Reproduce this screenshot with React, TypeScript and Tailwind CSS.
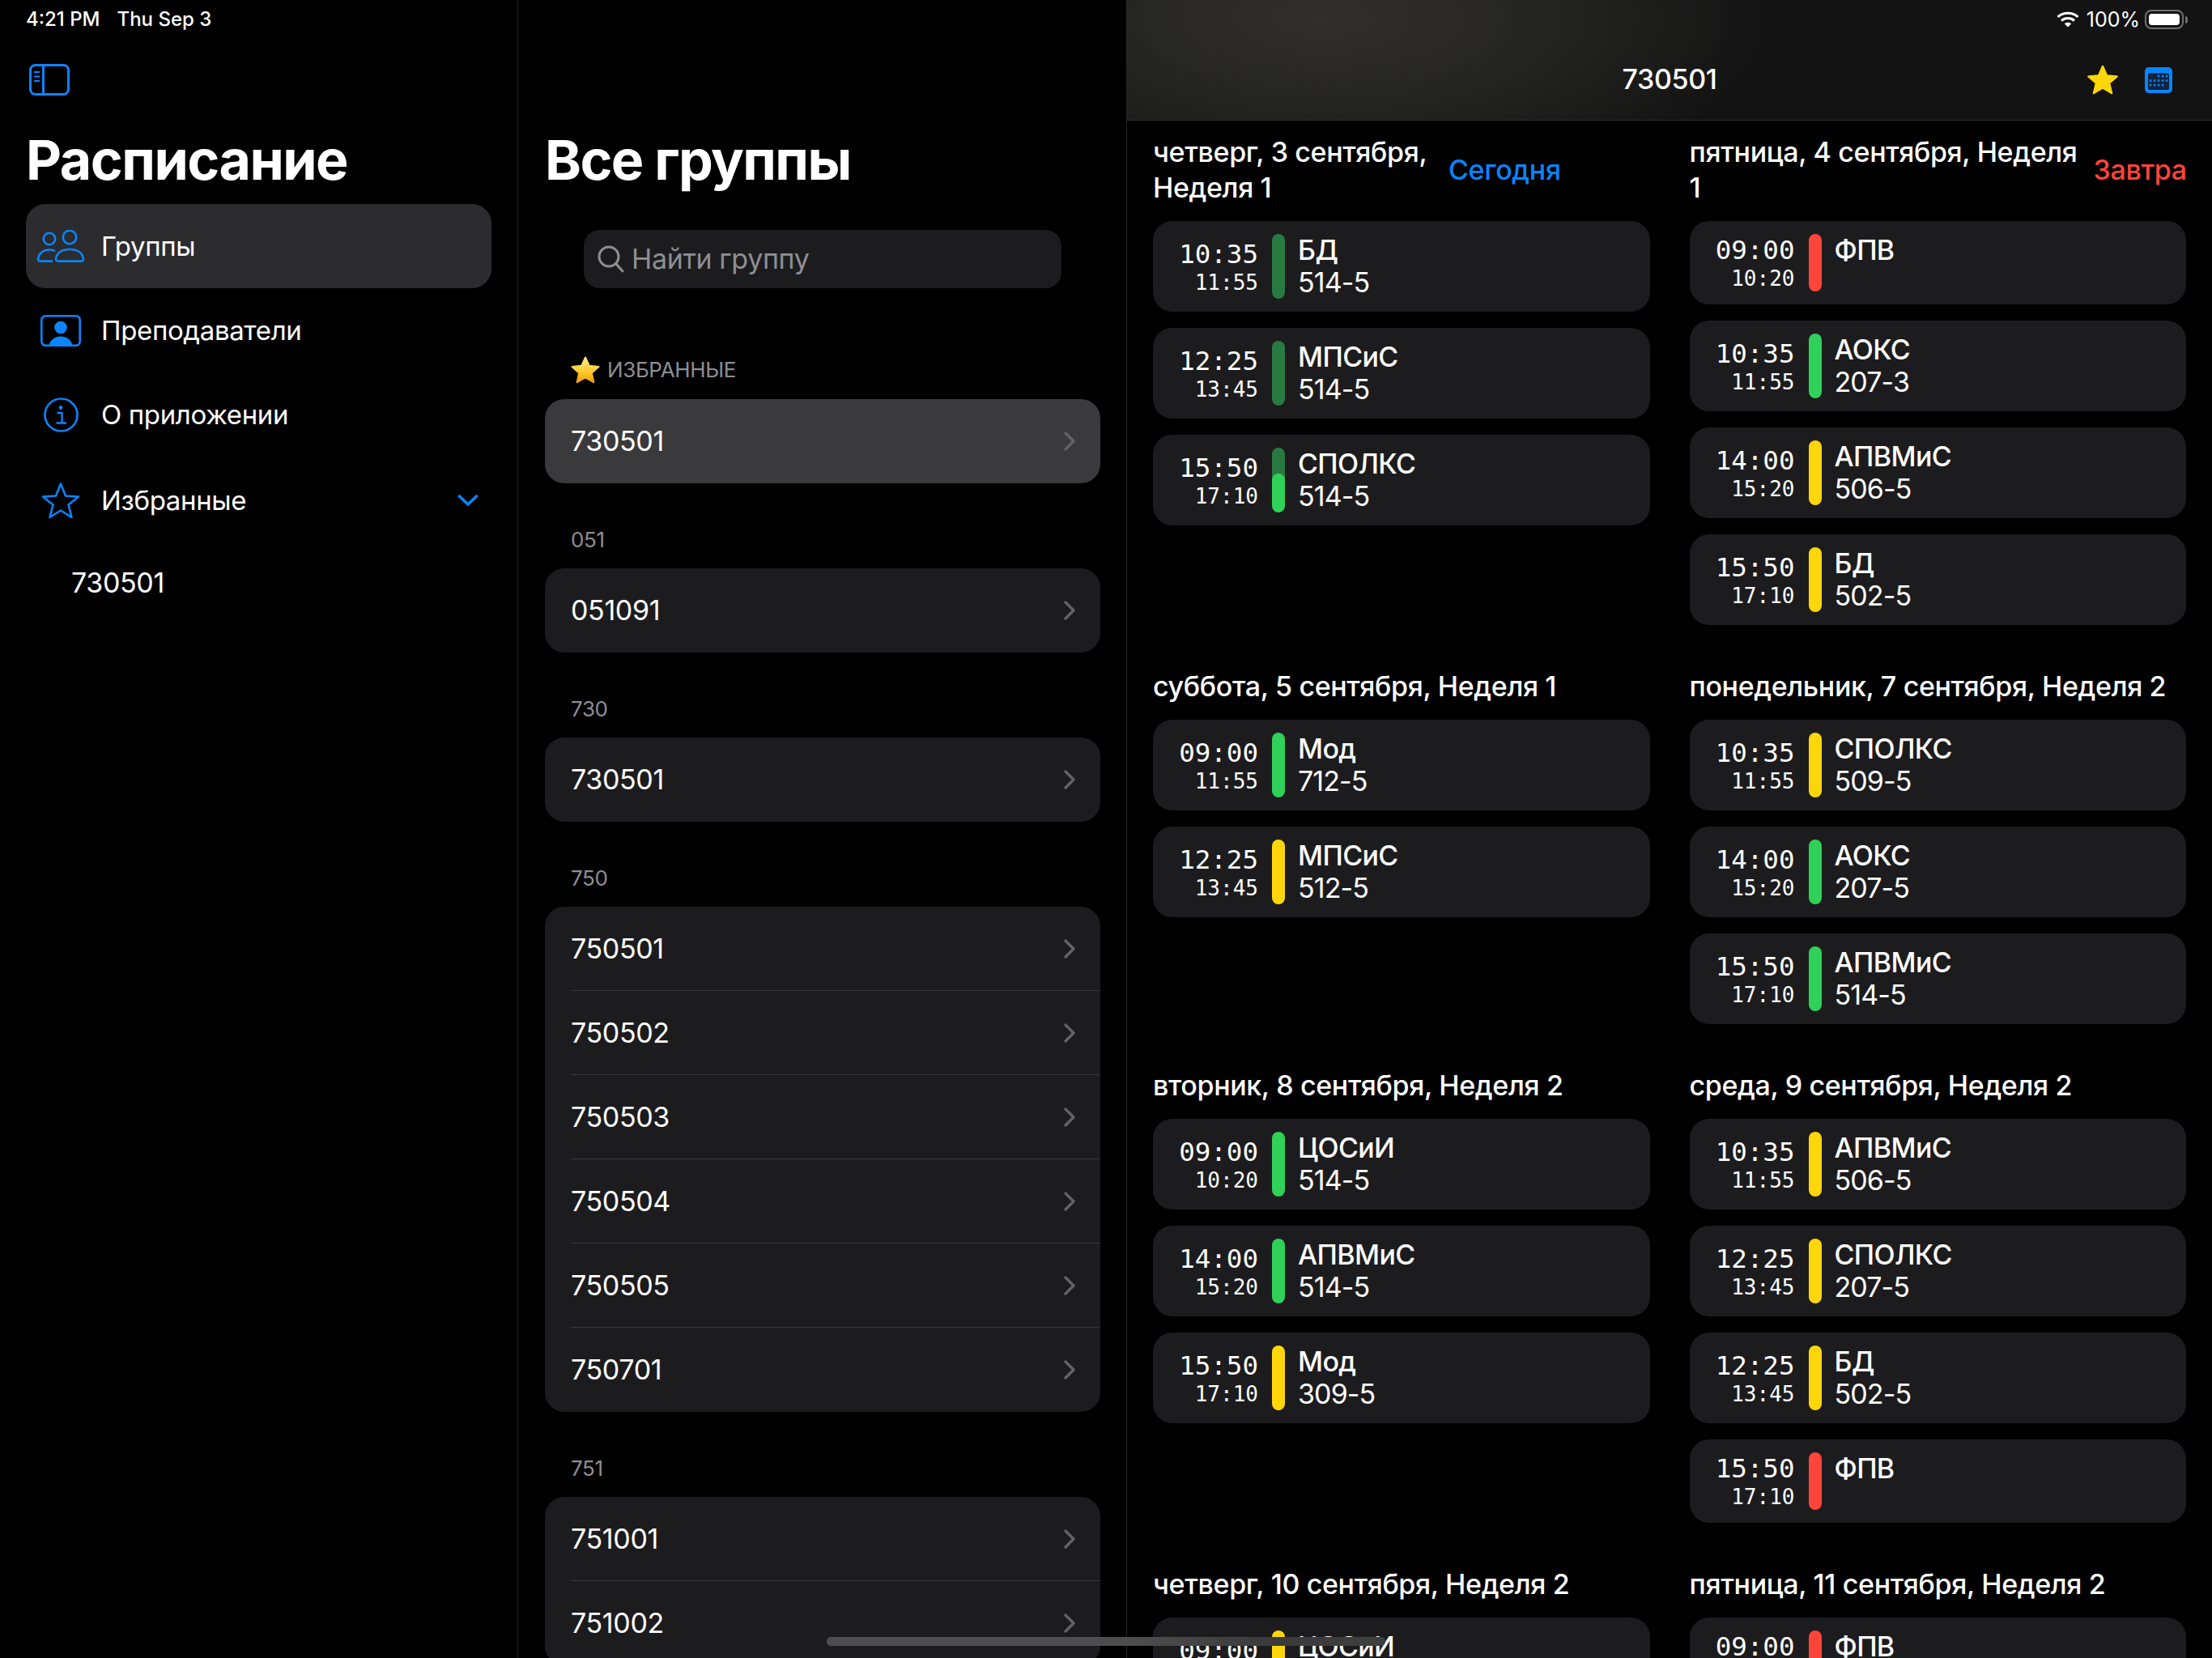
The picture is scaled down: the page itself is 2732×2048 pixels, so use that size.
import React from "react";

type Lesson = { from: string; to: string; name: string; room?: string; color: string; progress?: boolean };
type Day = { title: string; tag?: string; tagColor?: string; titleWidth?: string; lessons: Lesson[] };

const GREEN = "bg-[#30d158]";
const DONE = "bg-[#287a41]";
const YELLOW = "bg-[#ffd60a]";
const RED = "bg-[#ff453a]";

const days: Day[] = [
  {
    title: "четверг, 3 сентября,\nНеделя 1",
    tag: "Сегодня",
    tagColor: "text-[#0a84ff]",
    titleWidth: "w-[345px]",
    lessons: [
      { from: "10:35", to: "11:55", name: "БД", room: "514-5", color: DONE },
      { from: "12:25", to: "13:45", name: "МПСиС", room: "514-5", color: DONE },
      { from: "15:50", to: "17:10", name: "СПОЛКС", room: "514-5", color: DONE, progress: true },
    ],
  },
  {
    title: "пятница, 4 сентября, Неделя\n1",
    tag: "Завтра",
    tagColor: "text-[#ff453a]",
    titleWidth: "flex-1",
    lessons: [
      { from: "09:00", to: "10:20", name: "ФПВ", color: RED },
      { from: "10:35", to: "11:55", name: "АОКС", room: "207-3", color: GREEN },
      { from: "14:00", to: "15:20", name: "АПВМиС", room: "506-5", color: YELLOW },
      { from: "15:50", to: "17:10", name: "БД", room: "502-5", color: YELLOW },
    ],
  },
  {
    title: "суббота, 5 сентября, Неделя 1",
    lessons: [
      { from: "09:00", to: "11:55", name: "Мод", room: "712-5", color: GREEN },
      { from: "12:25", to: "13:45", name: "МПСиС", room: "512-5", color: YELLOW },
    ],
  },
  {
    title: "понедельник, 7 сентября, Неделя 2",
    lessons: [
      { from: "10:35", to: "11:55", name: "СПОЛКС", room: "509-5", color: YELLOW },
      { from: "14:00", to: "15:20", name: "АОКС", room: "207-5", color: GREEN },
      { from: "15:50", to: "17:10", name: "АПВМиС", room: "514-5", color: GREEN },
    ],
  },
  {
    title: "вторник, 8 сентября, Неделя 2",
    lessons: [
      { from: "09:00", to: "10:20", name: "ЦОСиИ", room: "514-5", color: GREEN },
      { from: "14:00", to: "15:20", name: "АПВМиС", room: "514-5", color: GREEN },
      { from: "15:50", to: "17:10", name: "Мод", room: "309-5", color: YELLOW },
    ],
  },
  {
    title: "среда, 9 сентября, Неделя 2",
    lessons: [
      { from: "10:35", to: "11:55", name: "АПВМиС", room: "506-5", color: YELLOW },
      { from: "12:25", to: "13:45", name: "СПОЛКС", room: "207-5", color: YELLOW },
      { from: "12:25", to: "13:45", name: "БД", room: "502-5", color: YELLOW },
      { from: "15:50", to: "17:10", name: "ФПВ", color: RED },
    ],
  },
  {
    title: "четверг, 10 сентября, Неделя 2",
    lessons: [{ from: "09:00", to: "10:20", name: "ЦОСиИ", room: "514-5", color: YELLOW }],
  },
  {
    title: "пятница, 11 сентября, Неделя 2",
    lessons: [{ from: "09:00", to: "10:20", name: "ФПВ", color: RED }],
  },
];

const groupSections = [
  { label: "051", rows: ["051091"] },
  { label: "730", rows: ["730501"] },
  { label: "750", rows: ["750501", "750502", "750503", "750504", "750505", "750701"] },
  { label: "751", rows: ["751001", "751002"] },
];

function SidebarToggleIcon() {
  return (
    <svg width="50" height="39" viewBox="0 0 50 39" fill="none" stroke="#0a84ff" strokeWidth="3">
      <rect x="1.5" y="1.5" width="47" height="36" rx="6" />
      <path d="M17.5 1.5V37.5" />
      <path d="M6 10H13M6 15.5H13M6 21H13" strokeWidth="2.2" />
    </svg>
  );
}

function GroupsIcon() {
  return (
    <svg width="60" height="40" viewBox="0 0 60 40" fill="none" stroke="#0a84ff" strokeWidth="2.6">
      <circle cx="16" cy="11" r="7.2" />
      <circle cx="41" cy="9" r="8.2" />
      <path d="M26 38.6H55.5a2.6 2.6 0 0 0 2.5-3.2C56.5 28 50 24 41 24S25.5 28 24 35.4a2.6 2.6 0 0 0 2 3.2Z" />
      <path d="M20 38.6H4.5a2.6 2.6 0 0 1-2.5-3.2C3.5 28.5 9 24.5 16 24.5c2.6 0 5 .5 7 1.6" />
    </svg>
  );
}

function TeacherIcon() {
  return (
    <svg width="50" height="39" viewBox="0 0 50 39" fill="none">
      <rect x="1.3" y="1.3" width="47.4" height="36.4" rx="5" stroke="#0a84ff" strokeWidth="2.6" />
      <circle cx="25" cy="15.5" r="7.8" fill="#0a84ff" />
      <path d="M10.5 37.5C12 31 17.5 26.5 25 26.5S38 31 39.5 37.5Z" fill="#0a84ff" />
    </svg>
  );
}

function InfoIcon() {
  return (
    <svg width="43" height="43" viewBox="0 0 43 43" fill="none" stroke="#0a84ff" strokeWidth="2.6">
      <circle cx="21.5" cy="21.5" r="20" />
      <circle cx="21" cy="12.5" r="2.4" fill="#0a84ff" stroke="none" />
      <path d="M16.5 19H22.5V31M15.5 31.5H28" strokeWidth="2.4" />
    </svg>
  );
}

function StarOutlineIcon() {
  return (
    <svg width="48" height="46" viewBox="0 0 48 46" fill="none" stroke="#0a84ff" strokeWidth="2.6" strokeLinejoin="round">
      <path d="M24 2.5L30 17.5L46 18.5L33.5 28.5L37.5 44L24 35.5L10.5 44L14.5 28.5L2 18.5L18 17.5Z" />
    </svg>
  );
}

function EmojiStar() {
  return (
    <svg width="36" height="34" viewBox="0 0 36 34">
      <defs>
        <linearGradient id="emojiStar" x1="0" y1="0" x2="0" y2="1">
          <stop offset="0" stopColor="#ffe98a" />
          <stop offset="0.6" stopColor="#ffc928" />
          <stop offset="1" stopColor="#f09a12" />
        </linearGradient>
      </defs>
      <path
        d="M18 1.5L22.8 11.8L34.5 13L25.8 20.8L28.4 32.3L18 26.3L7.6 32.3L10.2 20.8L1.5 13L13.2 11.8Z"
        fill="url(#emojiStar)"
        stroke="url(#emojiStar)"
        strokeWidth="2"
        strokeLinejoin="round"
      />
    </svg>
  );
}

function RowChevron() {
  return (
    <svg width="16" height="26" viewBox="0 0 16 26" fill="none" stroke="#636366" strokeWidth="3.4" strokeLinecap="round" strokeLinejoin="round">
      <path d="M3 3L13 13L3 23" />
    </svg>
  );
}

function WifiIcon() {
  return (
    <svg width="28" height="20" viewBox="0 0 28 20" fill="none" stroke="#fff" strokeWidth="3">
      <path d="M1.5 7C8.5 .8 19.5 .8 26.5 7" />
      <path d="M6 11.5C10.5 7.6 17.5 7.6 22 11.5" />
      <path d="M14 19.5L9.8 15.2C12.2 13.2 15.8 13.2 18.2 15.2Z" fill="#fff" stroke="none" />
    </svg>
  );
}

function Battery() {
  return (
    <div className="flex items-center gap-[2px]">
      <div className="h-[24px] w-[48px] rounded-[8px] border-2 border-[#6f6f6f] p-[3px]">
        <div className="h-full w-full rounded-[4px] bg-white" />
      </div>
      <div className="h-[9px] w-[3px] rounded-r-sm bg-[#6f6f6f]" />
    </div>
  );
}

function CalendarIcon() {
  const dots = [
    [17, 10], [22, 10], [27, 10],
    [7, 15.5], [12, 15.5], [17, 15.5], [22, 15.5], [27, 15.5],
    [7, 21], [12, 21], [17, 21], [22, 21],
  ];
  return (
    <svg width="34" height="32" viewBox="0 0 34 32">
      <rect width="34" height="32" rx="5" fill="#0a84ff" />
      <rect x="4" y="7.5" width="26" height="20.5" rx="2.5" fill="#13233b" />
      {dots.map(([x, y]) => (
        <rect key={`${x}-${y}`} x={x - 1.2} y={y - 1.2 + 1} width="2.6" height="2.6" fill="#0a84ff" />
      ))}
    </svg>
  );
}

function SolidStar() {
  return (
    <svg width="38" height="37" viewBox="0 0 38 37" fill="#ffd60a" stroke="#ffd60a" strokeWidth="2.5" strokeLinejoin="round">
      <path d="M19 2L24 13.6L36.5 14.6L27 22.6L30 35L19 28.4L8 35L11 22.6L1.5 14.6L14 13.6Z" />
    </svg>
  );
}

function Sidebar() {
  const items = [
    { label: "Группы", icon: <GroupsIcon />, active: true },
    { label: "Преподаватели", icon: <TeacherIcon /> },
    { label: "О приложении", icon: <InfoIcon /> },
  ];
  return (
    <aside className="flex h-full w-[640px] shrink-0 flex-col border-r border-[#262628] px-8">
      <div className="flex h-[48px] items-center gap-[21px] text-[24px] font-medium leading-none tracking-normal text-white">
        <span>4:21 PM</span>
        <span>Thu Sep 3</span>
      </div>
      <div className="mt-[31px] pl-1">
        <SidebarToggleIcon />
      </div>
      <h1 className="mt-[34px] h-[90px] text-[68px] font-bold leading-[90px] tracking-[-1.5px] text-white">Расписание</h1>
      <nav className="mt-[10px] flex flex-col">
        {items.map((item) => (
          <div
            key={item.label}
            className={`flex h-[104px] items-center rounded-[24px] ${item.active ? "bg-[#2c2c2e]" : ""}`}
          >
            <div className="flex w-[93px] justify-center pr-[7px]">{item.icon}</div>
            <span className="text-[33px] leading-none text-white">{item.label}</span>
          </div>
        ))}
        <div className="mt-[2px] flex h-[104px] items-center pr-4">
          <div className="flex w-[93px] justify-center pr-[7px]">
            <StarOutlineIcon />
          </div>
          <span className="flex-1 text-[33px] leading-none text-white">Избранные</span>
          <svg width="26" height="16" viewBox="0 0 26 16" fill="none" stroke="#0a84ff" strokeWidth="3.6" strokeLinecap="round" strokeLinejoin="round">
            <path d="M2.5 3L13 13L23.5 3" />
          </svg>
        </div>
        <div className="-mt-[2px] flex h-[104px] items-center pl-[56px] text-[34px] leading-none text-white">730501</div>
      </nav>
    </aside>
  );
}

function GroupRow({ name, selected, divider }: { name: string; selected?: boolean; divider?: boolean }) {
  return (
    <div className={`flex h-[104px] items-center pl-8 ${selected ? "bg-[#3a3a3c]" : ""}`}>
      <div className={`flex h-full flex-1 items-center pr-[30px] ${divider ? "border-b border-[#38383a]" : ""}`}>
        <span className="flex-1 text-[34px] leading-none text-white">{name}</span>
        <RowChevron />
      </div>
    </div>
  );
}

function GroupsPane() {
  return (
    <section className="flex h-full w-[752px] shrink-0 flex-col overflow-hidden border-r border-[#262628] pl-[33px] pr-8 pt-[152px]">
      <h2 className="h-[90px] text-[68px] font-bold leading-[90px] tracking-[-1.6px] text-white">Все группы</h2>
      <div className="mx-12 mt-[42px] flex h-[72px] shrink-0 items-center gap-[9px] rounded-[20px] bg-[#1c1c1e] pl-4 text-[34px] text-[#8e8e93]">
        <svg width="34" height="36" viewBox="0 0 34 36" fill="none" stroke="#8e8e93" strokeWidth="3" strokeLinecap="round">
          <circle cx="15" cy="15" r="12" />
          <path d="M24 24L32 33" />
        </svg>
        <span className="leading-none">Найти группу</span>
      </div>
      <div className="mt-[83px] flex h-[36px] shrink-0 items-center gap-[9px] pl-[32px] text-[26px] uppercase leading-none text-[#8e8e93]">
        <EmojiStar />
        <span>Избранные</span>
      </div>
      <div className="mt-[18px] shrink-0 overflow-hidden rounded-[24px]">
        <GroupRow name="730501" selected />
      </div>
      {groupSections.map((section) => (
        <div key={section.label} className="mt-[52px] shrink-0">
          <div className="flex h-[36px] items-center pl-8 text-[26px] leading-none text-[#8e8e93]">{section.label}</div>
          <div className="mt-[17px] overflow-hidden rounded-[24px] bg-[#1c1c1e]">
            {section.rows.map((row, i) => (
              <GroupRow key={row} name={row} divider={i < section.rows.length - 1} />
            ))}
          </div>
        </div>
      ))}
    </section>
  );
}

function LessonCard({ lesson }: { lesson: Lesson }) {
  return (
    <div className="flex rounded-[24px] bg-[#1c1c1e] py-4 pl-8">
      <div className="flex w-[98px] flex-col items-end justify-center font-['DejaVu_Sans_Mono',monospace] tracking-normal text-white">
        <span className="text-[32.5px] leading-[40px]">{lesson.from}</span>
        <span className="text-[26px] leading-[31px]">{lesson.to}</span>
      </div>
      <div className={`relative ml-[17px] w-4 overflow-hidden rounded-lg ${lesson.color}`}>
        {lesson.progress && <div className="absolute inset-x-0 bottom-0 h-[48px] rounded-lg bg-[#30d158]" />}
      </div>
      <div className="ml-[16px] flex flex-col text-[34px] leading-[40px] text-white">
        <span className="font-medium tracking-[-0.6px]">{lesson.name}</span>
        {lesson.room && <span className="tracking-[-0.9px]">{lesson.room}</span>}
      </div>
    </div>
  );
}

function DayColumn({ day }: { day: Day }) {
  return (
    <div className="flex flex-col">
      <div className="mb-[19px] flex items-center gap-[20px]">
        <h3 className={`whitespace-pre text-[34px] font-medium leading-[44px] text-white ${day.titleWidth ?? ""}`}>
          {day.title}
        </h3>
        {day.tag && <span className={`text-[34px] font-medium leading-none ${day.tagColor}`}>{day.tag}</span>}
      </div>
      <div className="flex flex-col gap-5">
        {day.lessons.map((lesson) => (
          <LessonCard key={lesson.from + lesson.name} lesson={lesson} />
        ))}
      </div>
    </div>
  );
}

function DetailPane() {
  return (
    <main className="flex h-full min-w-0 flex-1 flex-col overflow-hidden">
      <header className="relative h-[149px] shrink-0 border-b border-[#2c2c2e] bg-[radial-gradient(ellipse_42%_150%_at_18%_15%,#302f2b_0%,#242423_50%,#131313_100%)]">
        <div className="flex h-[48px] items-center justify-end pr-[30px] text-[25px] leading-none tracking-normal text-white">
          <WifiIcon />
          <span className="ml-[9px] mr-[6px]">100%</span>
          <Battery />
        </div>
        <div className="flex h-[100px] items-center justify-center text-[34px] font-medium leading-none text-white">
          730501
        </div>
        <div className="absolute right-[49px] top-[80px] flex items-center gap-[33px]">
          <SolidStar />
          <CalendarIcon />
        </div>
      </header>
      <div className="grid grid-cols-2 gap-x-[49px] gap-y-[54px] px-8 pt-[17px]">
        {days.map((day) => (
          <DayColumn key={day.title} day={day} />
        ))}
      </div>
    </main>
  );
}

export default function App() {
  return (
    <div className="relative flex h-[2048px] w-[2732px] overflow-hidden bg-black font-['Inter',sans-serif] tracking-[-0.36px] antialiased">
      <Sidebar />
      <GroupsPane />
      <DetailPane />
      {/* home indicator sits over the panes */}
      <div className="absolute left-[1021px] top-[2022px] h-[11px] w-[690px] rounded-full bg-[linear-gradient(90deg,#4d4d4d_0%,#4d4d4d_55%,#3a3a3a_80%,#3f3f3f_100%)]" />
    </div>
  );
}
